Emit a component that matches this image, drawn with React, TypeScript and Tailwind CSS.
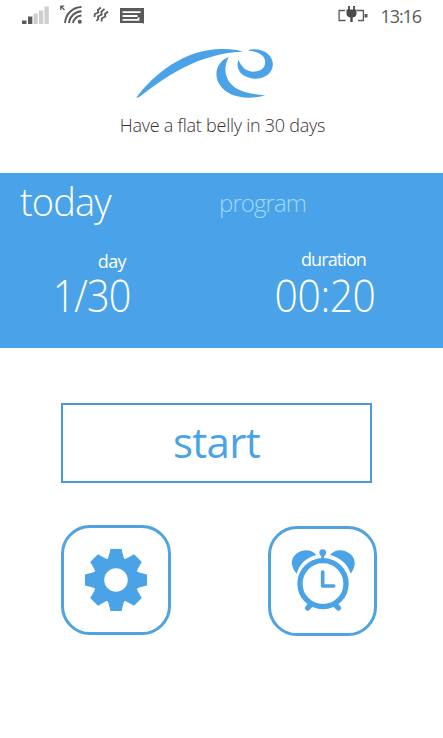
import type { ReactNode } from 'react';

function SignalIcon() {
  return (
    <svg width="28" height="20" viewBox="0 0 28 20">
      <rect x="0" y="15.5" width="4.5" height="3.5" fill="#5a5a5a" />
      <rect x="6" y="11.5" width="4.3" height="7.5" fill="#5a5a5a" />
      <rect x="11.5" y="8.5" width="4.3" height="10.5" fill="#cfcfcf" />
      <rect x="17" y="5.5" width="4.3" height="13.5" fill="#cfcfcf" />
      <rect x="22.5" y="1.5" width="4.3" height="17.5" fill="#cfcfcf" />
    </svg>
  );
}

function WifiIcon() {
  return (
    <svg width="24" height="20" viewBox="0 0 24 20" fill="none" stroke="#5a5a5a" strokeWidth="1.9">
      <path d="M0.8 5V1.2H4.2M1 1.4L4.5 5" strokeWidth="1.3" />
      <path d="M5 18A17 17 0 0 1 21.5 2" />
      <path d="M9 18A13 13 0 0 1 21.5 6.3" />
      <path d="M13 18A9 9 0 0 1 21.5 10.5" />
      <circle cx="19.8" cy="16.7" r="2" fill="#5a5a5a" stroke="none" />
    </svg>
  );
}

function VibrateIcon() {
  return (
    <svg width="17" height="20" viewBox="0 0 17 20" fill="none" stroke="#5a5a5a" strokeWidth="1.8">
      <path d="M7.8 2.5L4.8 5L5.3 7.5L1.8 9L1.5 12" />
      <path d="M11.5 3.8L8.3 6.8L8.8 9.5L5 11.5L5.2 14L3.5 16" />
      <path d="M15 6.5L12 9L12.3 11.5L8.8 13.3L8.5 16.5" />
    </svg>
  );
}

function MessageIcon() {
  return (
    <svg width="24" height="16" viewBox="0 0 24 16">
      <path d="M0 0H24V15.5L20.5 15H0Z" fill="#5a5a5a" />
      <path d="M2.5 4.2H20.5M2.5 8H17.5M2.5 11.8H18.5V9.5" fill="none" stroke="#fff" strokeWidth="1.8" />
    </svg>
  );
}

function BatteryIcon() {
  return (
    <svg width="31" height="20" viewBox="0 0 31 20" fill="none" stroke="#5a5a5a" strokeWidth="1.3">
      <path d="M7 5.5H1.1V15.5H7.5M19 5.5H25.4V15.5H20" />
      <path d="M26.5 9H29.5V12.5H26.5Z" fill="#5a5a5a" stroke="none" />
      <path d="M11 1V5M16 1V5" strokeWidth="2" />
      <path d="M8.5 4.5H18.5V8.5Q18.5 12 14.7 12.5V17H12.3V12.5Q8.5 12 8.5 8.5Z" fill="#4a4a4a" stroke="none" />
    </svg>
  );
}

function WaveLogo() {
  return (
    <svg width="140" height="52" viewBox="76.5 24 420 156" fill="#4aa3e6">
      <path d="M80 173C138 97 225 31 330 27C360 26 385 29 398 35C335 38 275 55 220 84C168 111 125 143 88 172Z" />
      <path d="M358 51C322 63 311 105 330 133C350 168 410 184 467 166C410 162 375 149 359 125C343 100 345 75 358 51Z" />
      <path d="M418 29C460 21 492 45 490 75C488 100 465 117 435 116C400 114 375 90 387 59C395 80 410 95 432 95C456 95 468 82 467 65C466 45 445 34 418 32Z" />
    </svg>
  );
}

function GearIcon() {
  const angles = [0, 45, 90, 135, 180, 225, 270, 315];
  return (
    <svg width="64" height="64" viewBox="-32 -32 64 64" fill="#4aa3e6">
      {angles.map(a => (
        <path key={a} d="M-10 -19Q-7.5 -22 -7 -25L-5.5 -31H5.5L7 -25Q7.5 -22 10 -19Z" transform={`rotate(${a})`} />
      ))}
      <circle r="17" fill="none" stroke="#4aa3e6" strokeWidth="10.5" />
    </svg>
  );
}

function AlarmIcon() {
  return (
    <svg width="64" height="64" viewBox="92 87 192 192" fill="none" stroke="#4aa3e6">
      <path d="M109 161C90 140 90 115 108 101C130 85 155 88 168 105C140 112 118 130 109 161Z" fill="#4aa3e6" stroke="none" />
      <path d="M271 161C288 140 287 115 269 101C247 85 222 88 209 105C237 112 262 130 271 161Z" fill="#4aa3e6" stroke="none" />
      <circle cx="188" cy="191" r="69" strokeWidth="16" />
      <circle cx="187" cy="98" r="10" fill="#4aa3e6" stroke="none" />
      <path d="M187 100V120" strokeWidth="8" />
      <path d="M187 156V198H220" strokeWidth="11" strokeLinecap="round" strokeLinejoin="round" />
      <path d="M152 253L142 264M224 253L234 264" strokeWidth="16" strokeLinecap="round" />
    </svg>
  );
}

function IconButton({ label, className, children }: { label: string; className?: string; children: ReactNode }) {
  return (
    <button
      aria-label={label}
      className={`flex h-[110px] items-center justify-center rounded-[29px] border-3 border-[#4fa3e0] ${className ?? ''}`}
    >
      {children}
    </button>
  );
}

export default function App() {
  return (
    <div className="h-[738px] w-[443px] overflow-hidden bg-white font-['Open_Sans',sans-serif] font-light">
      <div className="flex h-8 items-start px-[22px]">
        <div className="flex flex-1 items-start pt-[5px]">
          <SignalIcon />
          <div className="ml-[10px]"><WifiIcon /></div>
          <div className="ml-[9px]"><VibrateIcon /></div>
          <div className="ml-[10px] pt-[3px]"><MessageIcon /></div>
        </div>
        <div className="flex items-start">
          <div className="pt-[5px]"><BatteryIcon /></div>
          <span className="ml-3 text-[18px] leading-8 font-normal tracking-[-1.1px] text-[#5a5a5a]">13:16</span>
        </div>
      </div>

      <div className="flex h-[141px] flex-col items-center pt-4">
        <div className="-ml-[33px]"><WaveLogo /></div>
        <p className="mt-[13px] pl-[2px] text-[18px] leading-6 tracking-[-0.25px] whitespace-nowrap text-[#3d2f33]">
          Have a flat belly in 30 days
        </p>
      </div>

      <div className="h-[175px] bg-[#4aa3e8] pt-2 text-white">
        <div className="flex h-[66px] items-start">
          <span className="w-[219px] pl-5 text-[38px] leading-[41px] tracking-[-0.9px]">today</span>
          <span className="pt-[2px] text-[24px] leading-10 tracking-[-0.9px] text-[#a3d6fb]">program</span>
        </div>
        <div className="flex">
          <div className="flex w-[130px] flex-col items-end pt-[2px]">
            <span className="pr-1 text-[18px] leading-6 font-normal tracking-[-0.6px]">day</span>
            <span className="-mt-[2px] origin-right scale-x-[0.9] text-[44px] leading-[48px] tracking-[-1px]">1/30</span>
          </div>
          <div className="flex w-[245px] flex-col items-end">
            <span className="pr-[9px] text-[18px] leading-6 font-normal tracking-[-0.9px]">duration</span>
            <span className="origin-right scale-x-[0.93] text-[44px] leading-[48px] tracking-[-0.5px]">00:20</span>
          </div>
        </div>
      </div>

      <div className="flex flex-col pt-[55px] pl-[61px]">
        <button className="flex h-20 w-[311px] items-center justify-center border-2 border-[#4a9bd0] pb-1 text-[42px] font-normal tracking-[-0.7px] text-[#4aa3e6]">
          start
        </button>
        <div className="mt-[42px] flex gap-[97px]">
          <IconButton label="settings" className="w-[110px]"><GearIcon /></IconButton>
          <IconButton label="alarm" className="mt-px w-[109px]"><AlarmIcon /></IconButton>
        </div>
      </div>
    </div>
  );
}
